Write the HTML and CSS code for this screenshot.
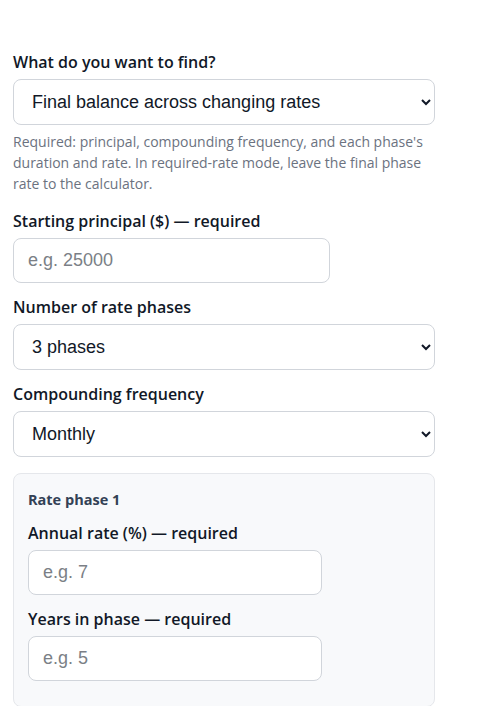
FILE: index.html
```html
<!DOCTYPE html>
<html lang="en">
<head>
    <meta charset="UTF-8">
    <meta name="viewport" content="width=device-width, initial-scale=1.0">
    <title>Multi-Phase Compound Interest Calculator</title>
    <link rel="stylesheet" href="styles.css">
</head>
<body>
    <form class="calc" id="calcForm">
        <div class="field">
            <label for="mode">What do you want to find?</label>
            <select id="mode" class="select">
                <option>Final balance across changing rates</option>
                <option>Required rate for final phase</option>
            </select>
            <p class="help">Required: principal, compounding frequency, and each phase's duration and rate. In required-rate mode, leave the final phase rate to the calculator.</p>
        </div>

        <div class="field">
            <label for="principal">Starting principal ($) — required</label>
            <input type="number" id="principal" class="input" placeholder="e.g. 25000">
        </div>

        <div class="field">
            <label for="phases">Number of rate phases</label>
            <select id="phases" class="select">
                <option>2 phases</option>
                <option selected>3 phases</option>
                <option>4 phases</option>
            </select>
        </div>

        <div class="field">
            <label for="frequency">Compounding frequency</label>
            <select id="frequency" class="select">
                <option>Annually</option>
                <option>Quarterly</option>
                <option selected>Monthly</option>
                <option>Daily</option>
            </select>
        </div>

        <div class="phase">
            <h3 class="phase-title">Rate phase 1</h3>
            <div class="field">
                <label for="rate1">Annual rate (%) — required</label>
                <input type="number" id="rate1" class="input" placeholder="e.g. 7">
            </div>
            <div class="field">
                <label for="years1">Years in phase — required</label>
                <input type="number" id="years1" class="input" placeholder="e.g. 5">
            </div>
        </div>
    </form>
</body>
</html>
```

FILE: styles.css
```css
* {
    margin: 0;
    padding: 0;
    box-sizing: border-box;
}

body {
    font-family: "Open Sans", Arial, sans-serif;
    background-color: #fff;
    color: #111827;
    padding: 52px 60px 0 13px;
}

.calc {
    max-width: 422px;
}

.field {
    margin-bottom: 14px;
}

label {
    display: block;
    font-size: 16px;
    font-weight: 600;
    line-height: 20px;
    margin-bottom: 7px;
}

.select,
.input {
    display: block;
    font-family: "Liberation Sans", Arial, sans-serif;
    font-size: 18px;
    color: #111827;
    background-color: #fff;
    border: 1px solid #d1d5db;
    border-radius: 8px;
}

.select {
    width: 100%;
    height: 46px;
    padding: 0 12px 0 14px;
}

.input {
    width: 75%;
    height: 45px;
    padding: 0 14px;
}

.input::placeholder {
    color: #7b7f86;
}

.help {
    margin-top: 6px;
    padding-bottom: 3px;
    font-size: 14px;
    line-height: 21px;
    color: #6b7280;
}

.phase {
    margin-top: 16px;
    background-color: #f8f9fb;
    border: 1px solid #e5e7eb;
    border-radius: 8px;
    padding: 16px 14px 11px;
}

.phase .field {
    margin-bottom: 14px;
}

.phase-title {
    font-size: 14.5px;
    font-weight: 700;
    line-height: 20px;
    color: #334155;
    margin-bottom: 13px;
}
```
